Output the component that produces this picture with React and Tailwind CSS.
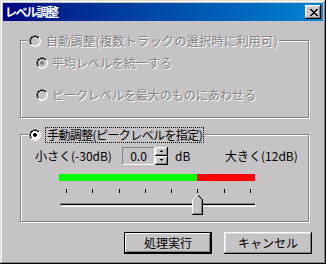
const GRAY = '#848284'
const FACE = '#c6c3c6'

const RADIO_MAP = [
  '....GGGG....',
  '..GGBBBBGG..',
  '.GBBWWWWBBH.',
  '.GBWWWWWWLH.',
  'GBWWWWWWWWLH',
  'GBWWWWWWWWLH',
  'GBWWWWWWWWLH',
  'GBWWWWWWWWLH',
  '.GBWWWWWWLH.',
  '.GLLWWWWLLH.',
  '..HHLLLLHH..',
  '....HHHH....',
]
const RADIO_DOT = ['', '', '', '', '.....XX', '....XXXX', '....XXXX', '.....XX']

function Radio({ checked, disabled }) {
  const colors = { G: GRAY, B: '#000', W: disabled ? FACE : '#fff', L: '#dfdfdf', H: '#fff' }
  const cells = []
  RADIO_MAP.forEach((row, y) => {
    row.split('').forEach((c, x) => {
      if (c === '.') return
      cells.push(<rect key={`${x}-${y}`} x={x} y={y} width="1" height="1" fill={colors[c]} />)
    })
  })
  if (checked) {
    RADIO_DOT.forEach((row, y) => {
      row.split('').forEach((c, x) => {
        if (c !== 'X') return
        cells.push(<rect key={`d${x}-${y}`} x={x} y={y} width="1" height="1" fill={disabled ? GRAY : '#000'} />)
      })
    })
  }
  return (
    <svg width="12" height="12" viewBox="0 0 12 12" shapeRendering="crispEdges" className="shrink-0">
      {cells}
    </svg>
  )
}

const CLOSE_X = ['XX....XX', '.XX..XX.', '..XXXX..', '...XX...', '..XXXX..', '.XX..XX.', 'XX....XX']

function CloseButton() {
  return (
    <div className="flex h-[14px] w-[16px] items-center justify-center bg-[#c6c3c6] pl-[1px] shadow-[inset_-1px_-1px_0_#000,inset_1px_1px_0_#fff,inset_-2px_-2px_0_#848284,inset_2px_2px_0_#dfdfdf]">
      <svg width="8" height="7" viewBox="0 0 8 7" shapeRendering="crispEdges">
        {CLOSE_X.flatMap((row, y) =>
          row.split('').map((c, x) => (c === 'X' ? <rect key={`${x}-${y}`} x={x} y={y} width="1" height="1" fill="#000" /> : null))
        )}
      </svg>
    </div>
  )
}

function thumbColor(x, y) {
  // 11 x 21 trackbar thumb pointing up
  const left = y < 5 ? 5 - y : 0
  const right = y < 5 ? 5 + y : 10
  if (x < left || x > right) return null
  if (y === 20) return '#000'
  if (x === right && y >= 1) return '#000'
  if (x === left) return '#fff'
  if (y === 19) return GRAY
  if (x === right - 1 && y >= 2) return GRAY
  return FACE
}

function SliderThumb() {
  const cells = []
  for (let y = 0; y < 21; y++) {
    for (let x = 0; x < 11; x++) {
      const c = thumbColor(x, y)
      if (c) cells.push(<rect key={`${x}-${y}`} x={x} y={y} width="1" height="1" fill={c} />)
    }
  }
  return (
    <svg width="11" height="21" viewBox="0 0 11 21" shapeRendering="crispEdges">
      {cells}
    </svg>
  )
}

function GroupBox({ className, legend, children }) {
  return (
    <div className={`relative ml-[20px] w-[289px] border border-[#848284] shadow-[inset_1px_1px_0_#fff,1px_1px_0_#fff] ${className}`}>
      <div className="absolute left-[7px] top-[-8px] flex h-[16px] items-center bg-[#c6c3c6] px-[1px]">{legend}</div>
      {children}
    </div>
  )
}

function Disabled({ children, className = '' }) {
  return <span className={`whitespace-nowrap text-[#848284] [text-shadow:1px_1px_0_#fff] ${className}`}>{children}</span>
}

function SpinArrow({ up }) {
  return (
    <svg width="5" height="3" viewBox="0 0 5 3" shapeRendering="crispEdges">
      {up ? (
        <>
          <rect x="2" y="0" width="1" height="1" fill="#000" />
          <rect x="1" y="1" width="3" height="1" fill="#000" />
        </>
      ) : (
        <>
          <rect x="1" y="0" width="3" height="1" fill="#000" />
          <rect x="2" y="1" width="1" height="1" fill="#000" />
        </>
      )}
    </svg>
  )
}

const raised = 'shadow-[inset_-1px_-1px_0_#000,inset_1px_1px_0_#fff,inset_-2px_-2px_0_#848284,inset_2px_2px_0_#dfdfdf]'

export default function App() {
  const ticks = [0, 1, 2, 3, 4, 5, 6, 7]

  return (
    <div className="h-[264px] w-[326px] overflow-hidden bg-[#c6c3c6] pt-[3px] font-['Noto_Sans_CJK_JP','Noto_Sans_CJK_SC',sans-serif] text-[12px] leading-none text-black shadow-[inset_-1px_-1px_0_#000,inset_1px_1px_0_#dfdfdf,inset_-2px_-2px_0_#848284,inset_2px_2px_0_#fff]">
      <div className="mx-[3px] flex h-[18px] items-center justify-between bg-linear-to-r from-[#000080] to-[#1084d0] pl-[2px] pr-[2px]">
        <span className="font-bold tracking-[-1.5px] text-white">レベル調整</span>
        <CloseButton />
      </div>

      <GroupBox
        className="mt-[19px] h-[78px]"
        legend={
          <div className="flex items-center gap-[5px]">
            <Radio disabled />
            <Disabled className="tracking-[0.4px]">自動調整(複数トラックの選択時に利用可)</Disabled>
          </div>
        }
      >
        <div className="flex flex-col gap-[20px] pl-[15px] pt-[16px]">
          <div className="flex h-[12px] items-center gap-[4px]">
            <Radio checked disabled />
            <Disabled>平均レベルを統一する</Disabled>
          </div>
          <div className="flex h-[12px] items-center gap-[4px]">
            <Radio disabled />
            <Disabled>ピークレベルを最大のものにあわせる</Disabled>
          </div>
        </div>
      </GroupBox>

      <GroupBox
        className="mt-[16px] h-[88px]"
        legend={
          <div className="flex items-center gap-[4px]">
            <Radio checked />
            <span className="whitespace-nowrap border border-dotted border-black px-[1px] py-[1px] tracking-[-0.6px]">手動調整(ピークレベルを指定)</span>
          </div>
        }
      >
        <div className="ml-[14px] mt-[12px] flex h-[18px] items-center whitespace-nowrap">
          <span className="w-[87px]">小さく(-30dB)</span>
          <div className="flex h-[18px]">
            <div className="flex w-[33px] items-center justify-center border-l border-t border-[#848284] border-b-white border-r-white border-b border-r">
              0.0
            </div>
            <div className="flex w-[13px] flex-col">
              <div className={`flex h-[9px] items-center justify-center ${raised}`}>
                <SpinArrow up />
              </div>
              <div className={`flex h-[9px] items-center justify-center ${raised}`}>
                <SpinArrow />
              </div>
            </div>
          </div>
          <span className="ml-[7px] w-[50px]">dB</span>
          <span>大きく(12dB)</span>
        </div>

        <div className="ml-[38px] mt-[9px] flex h-[7px]">
          <div className="w-[138px] bg-[#00ff00]" />
          <div className="w-[58px] bg-[#ff0000]" />
        </div>

        <div className="relative ml-[38px] mt-[8px] h-[26px] w-[198px]">
          <div className="ml-[7px] flex w-[185px] justify-between">
            {ticks.map((t) => (
              <div key={t} className="h-[4px] w-[1px] bg-black" />
            ))}
          </div>
          <div className="ml-[1px] mt-[10px] h-[4px] w-[196px] border border-[#848284] border-b-white border-r-white">
            <div className="h-[1px] bg-black" />
            <div className="h-[1px] bg-[#dfdfdf]" />
          </div>
          <div className="absolute left-[133px] top-[5px]">
            <SliderThumb />
          </div>
        </div>
      </GroupBox>

      <div className="ml-[124px] mt-[10px] flex gap-[12px]">
        <button className="h-[22px] w-[88px] border border-black bg-[#c6c3c6] shadow-[inset_-1px_-1px_0_#000,inset_1px_1px_0_#fff,inset_-2px_-2px_0_#848284]">
          処理実行
        </button>
        <button className={`h-[22px] w-[88px] bg-[#c6c3c6] ${raised}`}>キャンセル</button>
      </div>
    </div>
  )
}
